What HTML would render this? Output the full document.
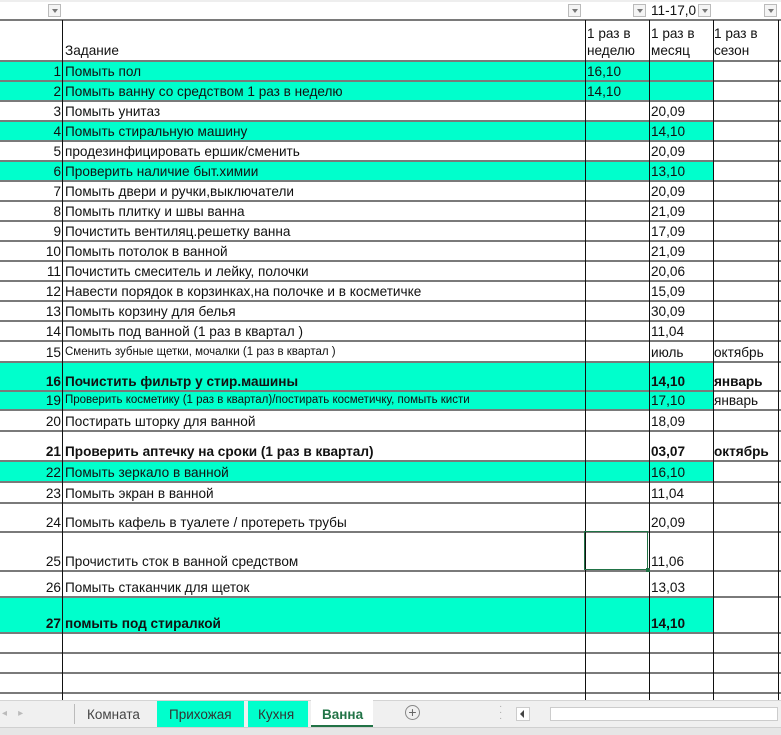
<!DOCTYPE html><html><head><meta charset="utf-8"><style>
body{margin:0;width:781px;height:734px;overflow:hidden;background:#fff;font-family:"Liberation Sans",sans-serif;font-size:13.6px;color:#111;position:relative}
.a{position:absolute}
.h{position:absolute;left:0;width:781px;height:2px;background:#7a7a7a}
.v{position:absolute;width:1px;background:#111}
.t{position:absolute;white-space:nowrap;line-height:15px}
.g{position:absolute;left:0;width:713px;background:#00FFCC}
.dd{position:absolute;top:4px;width:13px;height:13px;border:1px solid #bbb;background:#f4f4f4;box-sizing:border-box}
.dd:after{content:"";position:absolute;left:3px;top:4px;border:3px solid transparent;border-top:4px solid #777}
</style></head><body>
<div class="a" style="left:0;top:0;width:781px;height:2px;background:#eee"></div>
<div class="dd" style="left:48px"></div>
<div class="dd" style="left:568px"></div>
<div class="dd" style="left:633px"></div>
<div class="dd" style="left:698px"></div>
<div class="dd" style="left:764px"></div>
<div class="t" style="left:651px;top:3px">11-17,0</div>
<div id="g"></div>
<script>
var R=[["1","Помыть пол","16,10","","",61,81,1,0,0],
["2","Помыть ванну со средством 1 раз в неделю","14,10","","",81,101,1,0,0],
["3","Помыть унитаз","","20,09","",101,121,0,0,0],
["4","Помыть стиральную машину","","14,10","",121,141,1,0,0],
["5","продезинфицировать ершик/сменить","","20,09","",141,161,0,0,0],
["6","Проверить наличие быт.химии","","13,10","",161,181,1,0,0],
["7","Помыть двери и ручки,выключатели","","20,09","",181,201,0,0,0],
["8","Помыть плитку и швы ванна","","21,09","",201,221,0,0,0],
["9","Почистить вентиляц.решетку ванна","","17,09","",221,241,0,0,0],
["10","Помыть потолок в ванной","","21,09","",241,261,0,0,0],
["11","Почистить смеситель и лейку, полочки","","20,06","",261,281,0,0,0],
["12","Навести порядок в корзинках,на полочке и в косметичке","","15,09","",281,301,0,0,0],
["13","Помыть корзину для белья","","30,09","",301,321,0,0,0],
["14","Помыть под ванной (1 раз в квартал )","","11,04","",321,341,0,0,0],
["15","Сменить зубные щетки, мочалки (1 раз в квартал )","","июль","октябрь",341,362,0,0,1],
["16","Почистить фильтр у стир.машины","","14,10","январь",362,391,1,1,0],
["19","Проверить косметику (1 раз в квартал)/постирать косметичку, помыть кисти","","17,10","январь",391,410,1,0,1],
["20","Постирать шторку для ванной","","18,09","",410,431,0,0,0],
["21","Проверить аптечку на сроки (1 раз в квартал)","","03,07","октябрь",431,461,0,1,0],
["22","Помыть зеркало в ванной","","16,10","",461,482,1,0,0],
["23","Помыть экран в ванной","","11,04","",482,503,0,0,0],
["24","Помыть кафель в туалете / протереть трубы","","20,09","",503,532,0,0,0],
["25","Прочистить сток в ванной средством","","11,06","",532,571,0,0,0],
["26","Помыть стаканчик для щеток","","13,03","",571,597,0,0,0],
["27","помыть под стиралкой","","14,10","",597,633,1,1,0]];
var h='';
R.forEach(function(r){var t=r[5],b=r[6];
if(r[7])h+='<div class="g" style="top:'+t+'px;height:'+(b-t)+'px"></div>';
var st='top:'+(b-17)+'px;'+(r[8]?'font-weight:bold;':'')+(r[9]?'font-size:11.5px;':'');
var st2='top:'+(b-17)+'px;'+(r[8]?'font-weight:bold;':'');
h+='<div class="t" style="right:720px;'+st2+'">'+r[0]+'</div>';
h+='<div class="t" style="left:65px;'+st+'">'+r[1]+'</div>';
if(r[2])h+='<div class="t" style="left:587px;'+st2+'">'+r[2]+'</div>';
if(r[3])h+='<div class="t" style="left:651px;'+st2+'">'+r[3]+'</div>';
if(r[4])h+='<div class="t" style="left:714px;'+st2+'">'+r[4]+'</div>';
});
[20,61,81,101,121,141,161,181,201,221,241,261,281,301,321,341,362,391,410,431,461,482,503,532,571,597,633,653,673,693].forEach(function(y){h+='<div class="h" style="top:'+(y-1)+'px"></div>';});
[62,585,649,713,778].forEach(function(x){h+='<div class="v" style="left:'+x+'px;top:20px;height:680px"></div>';});
h+='<div class="a" style="left:584px;top:531px;width:64px;height:39px;border:1.5px solid #217346;box-sizing:border-box"></div>';
h+='<div class="a" style="left:646px;top:568px;width:4px;height:4px;background:#217346"></div>';
document.getElementById('g').innerHTML=h;
</script>
<div class="t" style="left:65px;top:43px">Задание</div>
<div class="t" style="left:587px;top:26px">1 раз в</div><div class="t" style="left:587px;top:43px">неделю</div>
<div class="t" style="left:651px;top:26px">1 раз в</div><div class="t" style="left:651px;top:43px">месяц</div>
<div class="t" style="left:714px;top:26px">1 раз в</div><div class="t" style="left:714px;top:43px">сезон</div>
<div class="a" style="left:0;top:700px;width:781px;height:34px;background:#f0f0f0;border-top:1px solid #d4d4d4"></div>
<div class="a" style="left:0;top:727px;width:781px;height:7px;background:#e6e6e6;border-top:1px solid #d0d0d0"></div>
<div class="t" style="left:2px;top:706px;color:#bbb;font-size:10px">◂ &nbsp; &nbsp;▸</div>
<div class="a" style="left:74px;top:704px;width:1px;height:20px;background:#bbb"></div>
<div class="t" style="left:87px;top:707px;color:#444;font-size:13.5px">Комната</div>
<div class="a" style="left:157px;top:701px;width:87px;height:26px;background:#00FFCC"></div>
<div class="t" style="left:169px;top:707px;color:#333;font-size:13.5px">Прихожая</div>
<div class="a" style="left:248px;top:701px;width:60px;height:26px;background:#00FFCC"></div>
<div class="t" style="left:258px;top:707px;color:#333;font-size:13.5px">Кухня</div>
<div class="a" style="left:311px;top:700px;width:62px;height:27px;background:#fff;border-bottom:2px solid #217346;box-sizing:border-box"></div>
<div class="t" style="left:322px;top:707px;color:#217346;font-size:13.5px;font-weight:bold">Ванна</div>
<div class="a" style="left:405px;top:705px;width:15px;height:15px;border:1px solid #888;border-radius:50%;box-sizing:border-box;text-align:center;line-height:12px;color:#666;font-size:14px">+</div>
<div class="t" style="left:499px;top:704px;color:#aaa;font-size:10px;line-height:6px">·<br>·<br>·</div>
<div class="a" style="left:516px;top:707px;width:14px;height:14px;border:1px solid #ccc;background:#fff;box-sizing:border-box"></div>
<div class="a" style="left:520px;top:710px;border:4px solid transparent;border-right:4px solid #444;border-left:0"></div>
<div class="a" style="left:550px;top:707px;width:228px;height:14px;border:1px solid #ccc;background:#fff;box-sizing:border-box"></div>
</body></html>
